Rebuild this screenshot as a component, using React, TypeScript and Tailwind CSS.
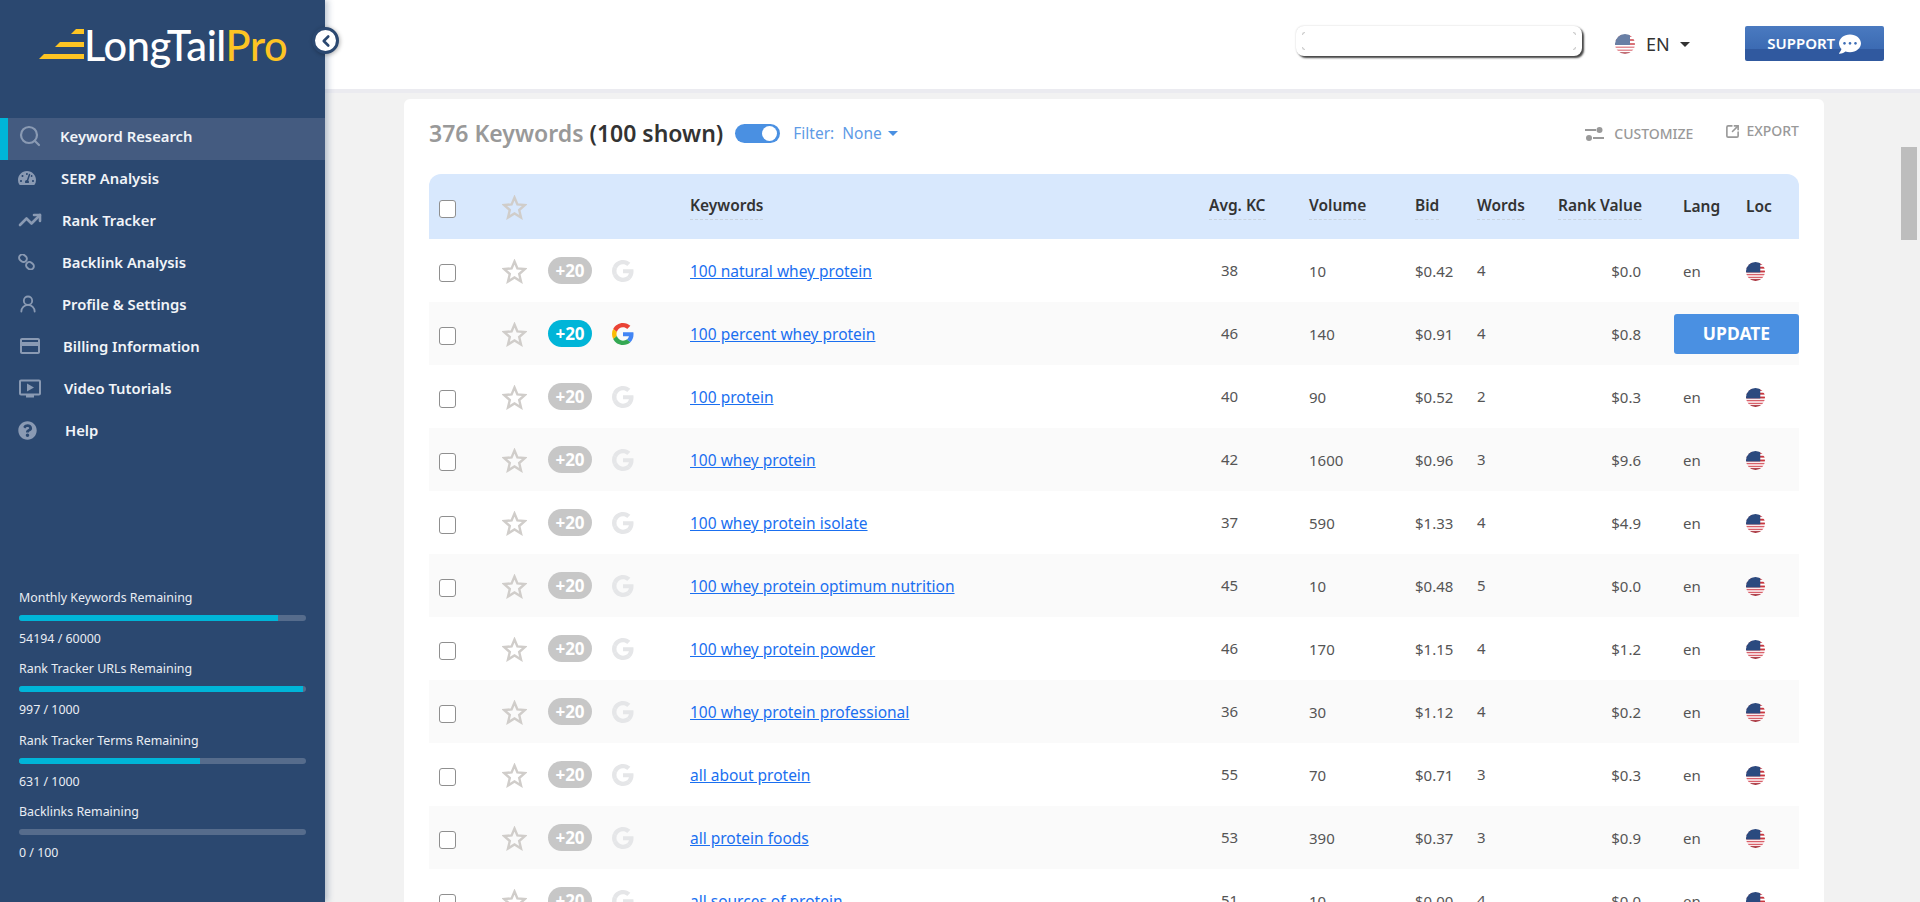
import { ChevronLeft, Search, SquareArrowOutUpRight, TrendingUp, UserRound } from 'lucide-react';
import { ReactNode } from 'react';
import { FaCommentDots, FaQuestionCircle, FaTachometerAlt } from 'react-icons/fa';
import { MdCreditCard, MdOndemandVideo } from 'react-icons/md';

const GRID =
	'grid grid-cols-[73px_46px_64px_78px_519px_100px_106px_62px_81px_116px_72px_53px] items-center';

const NAV_ITEMS: { label: string; icon: ReactNode; textClass: string }[] = [
	{ label: 'Keyword Research', icon: <Search size={24} strokeWidth={2.2} />, textClass: 'ml-[18px]' },
	{ label: 'SERP Analysis', icon: <FaTachometerAlt size={18} />, textClass: 'ml-[19px]' },
	{ label: 'Rank Tracker', icon: <TrendingUp size={28} strokeWidth={2.6} />, textClass: 'ml-[20px]' },
	{ label: 'Backlink Analysis', icon: <ChainIcon />, textClass: 'ml-[20px]' },
	{ label: 'Profile & Settings', icon: <UserRound size={20} strokeWidth={2.2} />, textClass: 'ml-[20px]' },
	{ label: 'Billing Information', icon: <MdCreditCard size={24} />, textClass: 'ml-[21px]' },
	{ label: 'Video Tutorials', icon: <MdOndemandVideo size={25} />, textClass: 'ml-[22px]' },
	{ label: 'Help', icon: <FaQuestionCircle size={19} />, textClass: 'ml-[23px]' },
];

const QUOTAS = [
	{ label: 'Monthly Keywords Remaining', value: '54194 / 60000', fill: 'w-[259px]' },
	{ label: 'Rank Tracker URLs Remaining', value: '997 / 1000', fill: 'w-[284px]' },
	{ label: 'Rank Tracker Terms Remaining', value: '631 / 1000', fill: 'w-[181px]' },
	{ label: 'Backlinks Remaining', value: '0 / 100', fill: 'w-0' },
];

const ROWS = [
	['100 natural whey protein', '38', '10', '$0.42', '4', '$0.0'],
	['100 percent whey protein', '46', '140', '$0.91', '4', '$0.8'],
	['100 protein', '40', '90', '$0.52', '2', '$0.3'],
	['100 whey protein', '42', '1600', '$0.96', '3', '$9.6'],
	['100 whey protein isolate', '37', '590', '$1.33', '4', '$4.9'],
	['100 whey protein optimum nutrition', '45', '10', '$0.48', '5', '$0.0'],
	['100 whey protein powder', '46', '170', '$1.15', '4', '$1.2'],
	['100 whey protein professional', '36', '30', '$1.12', '4', '$0.2'],
	['all about protein', '55', '70', '$0.71', '3', '$0.3'],
	['all protein foods', '53', '390', '$0.37', '3', '$0.9'],
	['all sources of protein', '51', '10', '$0.00', '4', '$0.0'],
];

function ChainIcon() {
	return (
		<svg width="17" height="16" viewBox="0 0 17 16" fill="none" stroke="currentColor" strokeWidth="2">
			<rect x="1" y="1" width="8" height="6.5" rx="3.2" transform="rotate(40 5 4.2)" />
			<rect x="8" y="8.5" width="8" height="6.5" rx="3.2" transform="rotate(40 12 11.7)" />
		</svg>
	);
}

function Caret({ className }: { className: string }) {
	return (
		<svg className={className} width="10" height="5" viewBox="0 0 10 5" fill="currentColor">
			<polygon points="0,0 10,0 5,5" />
		</svg>
	);
}

function UsFlag({ className }: { className: string }) {
	return (
		<svg className={className} viewBox="0 0 20 20">
			<defs>
				<clipPath id="flag-circle">
					<circle cx="10" cy="10" r="10" />
				</clipPath>
			</defs>
			<g clipPath="url(#flag-circle)">
				<rect width="20" height="20" fill="#fff" />
				<rect y="1" width="20" height="2" fill="#c8373f" />
				<rect y="5" width="20" height="2" fill="#c8373f" />
				<rect y="9" width="20" height="2" fill="#c8373f" />
				<rect y="12.5" width="20" height="1.5" fill="#d9606a" />
				<rect y="15.5" width="20" height="1.5" fill="#d9606a" />
				<rect y="18" width="20" height="2" fill="#a8323c" />
				<rect width="15" height="11" fill="#2b4a7f" />
			</g>
		</svg>
	);
}

function GoogleG({ muted }: { muted: boolean }) {
	return (
		<svg width="22" height="22" viewBox="0 0 48 48">
			<path fill={muted ? '#e5e6e8' : '#EA4335'} d="M24 9.5c3.54 0 6.71 1.22 9.21 3.6l6.85-6.85C35.9 2.38 30.47 0 24 0 14.62 0 6.51 5.38 2.56 13.22l7.98 6.19C12.43 13.72 17.74 9.5 24 9.5z" />
			<path fill={muted ? '#e5e6e8' : '#4285F4'} d="M46.98 24.55c0-1.57-.15-3.09-.38-4.55H24v9.02h12.94c-.58 2.96-2.26 5.48-4.78 7.18l7.73 6c4.51-4.18 7.09-10.36 7.09-17.65z" />
			<path fill={muted ? '#e5e6e8' : '#FBBC05'} d="M10.53 28.59c-.48-1.45-.76-2.99-.76-4.59s.27-3.14.76-4.59l-7.98-6.19C.92 16.46 0 20.12 0 24c0 3.88.92 7.54 2.56 10.78l7.97-6.19z" />
			<path fill={muted ? '#e5e6e8' : '#34A853'} d="M24 48c6.48 0 11.93-2.13 16.08-5.81l-7.73-6c-2.15 1.45-4.92 2.3-8.35 2.3-6.26 0-11.57-4.22-13.47-9.91l-7.98 6.19C6.51 42.62 14.62 48 24 48z" />
		</svg>
	);
}

function Checkbox() {
	return <span className="ml-[10px] mt-[4px] block h-[18px] w-[17px] rounded-[3px] border border-[#8f8f8f] bg-white" />;
}

function FavStar() {
	return (
		<svg width="25" height="25" viewBox="0 0 25 25" fill="none" stroke="#d0cdca" strokeWidth="2.4" className="mt-[1px]">
			<polygon points="12.5,2.5 15.4,9.4 23,10 17.2,15 19,22.5 12.5,18.5 6,22.5 7.8,15 2,10 9.6,9.4" />
		</svg>
	);
}

function HeadLabel({ children }: { children: ReactNode }) {
	return (
		<span className="mt-[2px] inline-block border-b border-dashed border-[#c9d3de] pb-[4px] text-[15.5px] font-semibold text-[#333] leading-[19px]">
			{children}
		</span>
	);
}

function Sidebar() {
	return (
		<aside className="relative z-10 flex w-[325px] shrink-0 flex-col bg-[#2b4870] shadow-[3px_0_6px_rgba(43,72,112,0.3)]">
			<div className="flex h-[118px] items-start pl-[39px] pt-[21px]">
				<svg className="mt-[8px]" width="45" height="30" viewBox="0 0 45 30" fill="#fdc423">
					<polygon points="37,0 45,0 45,5 32,5" />
					<polygon points="21,13 45,13 45,18 16,18" />
					<polygon points="5,25 45,25 45,30 0,30" />
				</svg>
				<span className="font-['Lato',sans-serif] text-[41.5px] font-medium leading-[48px] tracking-[-0.4px] text-white">
					LongTail<span className="text-[#fdc423]">Pro</span>
				</span>
			</div>
			<button className="absolute left-[312px] top-[27px] flex size-[27px] items-center justify-center rounded-full border-[3px] border-[#2b4870] bg-white text-[#2b4870] shadow-[1px_1px_4px_rgba(0,0,0,0.3)]">
				<ChevronLeft size={18} strokeWidth={3.5} />
			</button>
			<nav className="flex flex-col">
				{NAV_ITEMS.map((item, i) => (
					<div
						key={item.label}
						className={
							i === 0
								? 'flex h-[42px] items-center border-l-[8px] border-[#00b5d8] bg-[#445b80] pb-[6px] pl-[10px] text-[14.8px] font-semibold text-[#f1f4f8]'
								: 'flex h-[42px] items-center pb-[6px] pl-[18px] text-[14.8px] font-semibold text-[#f1f4f8]'
						}
					>
						<span className="flex w-[24px] items-center overflow-visible text-[#8a9ab3]">{item.icon}</span>
						<span className={item.textClass}>{item.label}</span>
					</div>
				))}
			</nav>
			<div className="mt-[135px] flex flex-col pl-[19px] text-[12.4px] text-[#e9edf3]">
				{QUOTAS.map((q) => (
					<div key={q.label} className="h-[71.3px]">
						<div className="leading-[18px]">{q.label}</div>
						<div className="mt-[8px] h-[6px] w-[287px] overflow-hidden rounded-[3px] bg-[#566c8c]">
							<div className={`h-full bg-[#00b5d8] ${q.fill}`} />
						</div>
						<div className="mt-[9px] leading-[18px]">{q.value}</div>
					</div>
				))}
			</div>
		</aside>
	);
}

function TopBar() {
	return (
		<header className="flex h-[93px] shrink-0 items-start border-b-[4px] border-[#ebebf0] bg-white">
			<div className="ml-[971px] mt-[26px] flex h-[30px] w-[286px] flex-col justify-between rounded-[8px] bg-white px-[6px] py-[6px] shadow-[2px_2px_2px_#444,0_0_2px_rgba(0,0,0,0.2)]">
				<div className="flex justify-between">
					<span className="size-[3px] rounded-tl-[3px] border-l border-t border-[#ccc]" />
					<span className="size-[3px] rounded-tr-[3px] border-r border-t border-[#ccc]" />
				</div>
				<div className="flex justify-between">
					<span className="size-[3px] rounded-bl-[3px] border-b border-l border-[#ccc]" />
					<span className="size-[3px] rounded-br-[3px] border-b border-r border-[#ccc]" />
				</div>
			</div>
			<div className="ml-[33px] mt-[34px] flex h-[20px] items-center text-[#333]">
				<UsFlag className="size-[20px] opacity-70" />
				<span className="ml-[11px] text-[18px] leading-[20px]">EN</span>
				<Caret className="ml-[10px] text-[#333]" />
			</div>
			<button className="ml-[55px] mt-[26px] flex h-[35px] w-[139px] items-center justify-center gap-[4px] rounded-[2px] bg-[linear-gradient(#4a7ac0_0%,#3c6bb3_65%,#30599f_65%,#30599f_100%)] text-[15px] font-semibold text-white">
				SUPPORT
				<FaCommentDots size={22} />
			</button>
		</header>
	);
}

function Toolbar() {
	return (
		<div className="flex h-[75px] items-start pt-[18px]">
			<h1 className="text-[23px] font-semibold leading-[32px] text-[#333]">
				<span className="text-[#999]">376 Keywords</span> (100 shown)
			</h1>
			<span className="ml-[12px] mt-[7px] flex h-[19px] w-[45px] items-center justify-end rounded-full bg-[#4a90e2] pr-[3px]">
				<span className="size-[15px] rounded-full bg-white" />
			</span>
			<span className="ml-[13px] mt-[7px] flex items-center text-[15.5px] leading-[19px] text-[#5f9be6]">
				Filter:
				<span className="ml-[8px]">None</span>
				<Caret className="ml-[6px] text-[#4a90e2]" />
			</span>
			<span className="ml-auto mt-[8px] flex items-center text-[14px] font-medium leading-[18px] text-[#999]">
				<svg width="19" height="14" viewBox="0 0 19 14" fill="currentColor">
					<rect y="2" width="11" height="2" />
					<circle cx="14.5" cy="3" r="3" />
					<rect x="8" y="10" width="11" height="2" />
					<circle cx="4" cy="11" r="3" />
				</svg>
				<span className="ml-[10px]">CUSTOMIZE</span>
			</span>
			<span className="ml-[32px] mt-[5px] flex items-center text-[14px] font-medium leading-[18px] text-[#999]">
				<SquareArrowOutUpRight size={15} strokeWidth={2.6} />
				<span className="ml-[6px]">EXPORT</span>
			</span>
		</div>
	);
}

function KeywordTable() {
	return (
		<div>
			<div className={`${GRID} h-[65px] rounded-t-[12px] bg-[#d8e8fd]`}>
				<Checkbox />
				<FavStar />
				<span />
				<span />
				<span><HeadLabel>Keywords</HeadLabel></span>
				<span><HeadLabel>Avg. KC</HeadLabel></span>
				<span><HeadLabel>Volume</HeadLabel></span>
				<span><HeadLabel>Bid</HeadLabel></span>
				<span><HeadLabel>Words</HeadLabel></span>
				<span><HeadLabel>Rank Value</HeadLabel></span>
				<span className="pl-[9px] text-[15.5px] font-semibold text-[#333]">Lang</span>
				<span className="text-[15.5px] font-semibold text-[#333]">Loc</span>
			</div>
			{ROWS.map((row, i) => {
				const active = i === 1;
				return (
					<div
						key={row[0]}
						className={`${GRID} h-[63px] text-[15px] text-[#555] ${i % 2 === 1 ? 'bg-[#fafafa]' : 'bg-white'}`}
					>
						<Checkbox />
						<FavStar />
						<span
							className={`flex h-[27px] w-[44px] items-center justify-center rounded-full text-[17px] font-bold text-white ${active ? 'bg-[#00b5d8]' : 'bg-[#c7c7c7]'}`}
						>
							+20
						</span>
						<GoogleG muted={!active} />
						<a className="mt-[3px] text-[15.5px] text-[#1a6ff0] underline">{row[0]}</a>
						<span className="pl-[12px]">{row[1]}</span>
						<span className="mt-[2px]">{row[2]}</span>
						<span className="mt-[2px]">{row[3]}</span>
						<span>{row[4]}</span>
						<span className="mt-[2px] pr-[33px] text-right">{row[5]}</span>
						{active ? (
							<button className="col-span-2 h-[40px] rounded-[3px] bg-[#4a90e2] text-[17.5px] font-bold text-white">
								UPDATE
							</button>
						) : (
							<>
								<span className="mt-[2px] pl-[9px]">en</span>
								<UsFlag className="mt-[2px] size-[19px]" />
							</>
						)}
					</div>
				);
			})}
		</div>
	);
}

export default function App() {
	return (
		<div className="flex h-[902px] w-[1920px] overflow-hidden bg-[#f2f2f2] font-['Noto_Sans',sans-serif]">
			<Sidebar />
			<div className="flex min-w-0 flex-1 flex-col">
				<TopBar />
				<div className="flex min-h-0 flex-1">
					<main className="ml-[79px] mt-[6px] w-[1420px] rounded-t-[6px] bg-white px-[25px]">
						<Toolbar />
						<KeywordTable />
					</main>
					<div className="ml-[76px] w-[20px] bg-[#f1f1f1] pl-[1px] pt-[54px]">
						<div className="h-[93px] w-[16px] bg-[#bdbdbd]" />
					</div>
				</div>
			</div>
		</div>
	);
}
